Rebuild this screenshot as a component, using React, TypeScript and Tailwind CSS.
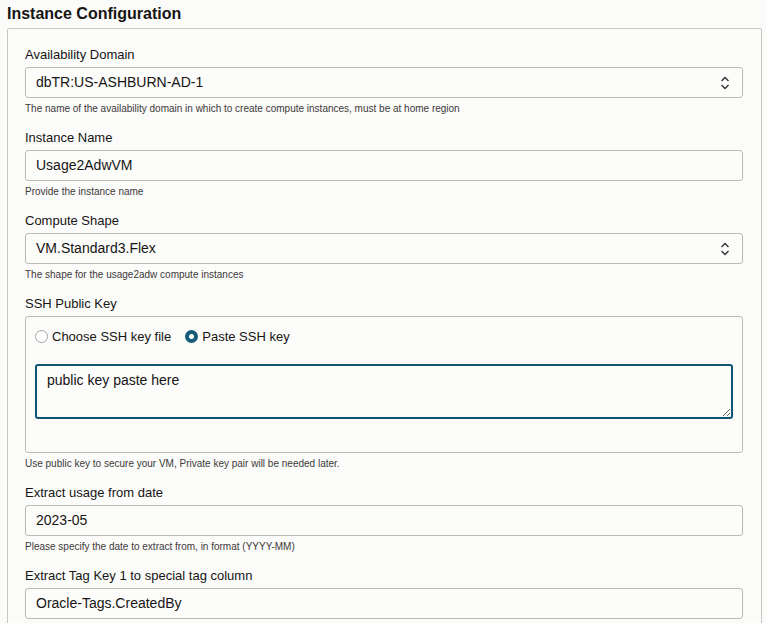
function Chevrons() {
  return (
    <svg width="10" height="14" viewBox="0 0 10 14" className="text-[#333]">
      <path d="M1.5 5 L5 1.5 L8.5 5" fill="none" stroke="currentColor" strokeWidth="1.4" />
      <path d="M1.5 9 L5 12.5 L8.5 9" fill="none" stroke="currentColor" strokeWidth="1.4" />
    </svg>
  );
}

function Field({ label, help, children }: { label: string; help?: string; children: React.ReactNode }) {
  return (
    <div className="flex flex-col">
      <label className="text-[13px] leading-[16px] text-[#161513] mb-[4px]">{label}</label>
      {children}
      {help && <p className="text-[10px] leading-[12px] text-[#3b3a38] mt-[5px]">{help}</p>}
    </div>
  );
}

function TextBox({ value, select }: { value: string; select?: boolean }) {
  return (
    <div className="h-[31px] border border-[#bcbab5] rounded-[3px] bg-[#fcfcfb] flex items-center justify-between pl-[10px] pr-[12px]">
      <span className="text-[14px] text-[#161513]">{value}</span>
      {select && <Chevrons />}
    </div>
  );
}

export default function App() {
  return (
    <div className="w-[766px] h-[623px] overflow-hidden bg-[#fbfbfa] font-['Liberation_Sans',Arial,sans-serif] text-[#161513]">
      <h2 className="text-[16px] leading-[20px] font-bold pl-[7px] pt-[4px] pb-[4px]">Instance Configuration</h2>
      <div className="ml-[7px] mr-[4px] border border-[#c9c7c3] rounded-[2px] pl-[17px] pr-[18px] pt-[18px] pb-[20px] flex flex-col gap-[15px]">
        <Field label="Availability Domain" help="The name of the availability domain in which to create compute instances, must be at home region">
          <TextBox value="dbTR:US-ASHBURN-AD-1" select />
        </Field>
        <Field label="Instance Name" help="Provide the instance name">
          <TextBox value="Usage2AdwVM" />
        </Field>
        <Field label="Compute Shape" help="The shape for the usage2adw compute instances">
          <TextBox value="VM.Standard3.Flex" select />
        </Field>
        <Field label="SSH Public Key" help="Use public key to secure your VM, Private key pair will be needed later.">
          <div className="h-[137px] border border-[#bcbab5] rounded-[3px] pl-[9px] pr-[9px] pt-[10px]">
            <div className="flex items-center gap-[14px] text-[13px]">
              <label className="flex items-center gap-[4px]">
                <span className="w-[13px] h-[13px] rounded-full border border-[#a6a4a0] bg-white" />
                Choose SSH key file
              </label>
              <label className="flex items-center gap-[4px]">
                <span className="w-[13px] h-[13px] rounded-full bg-[#145c7a] flex items-center justify-center">
                  <span className="w-[5px] h-[5px] rounded-full bg-white" />
                </span>
                Paste SSH key
              </label>
            </div>
            <textarea
              readOnly
              defaultValue="public key paste here"
              className="mt-[17px] block w-full h-[55px] border-2 border-[#0f5471] rounded-[3px] bg-[#fcfcfb] px-[10px] py-[5px] text-[14px] leading-[18px] text-[#161513] outline-none resize"
            />
          </div>
        </Field>
        <Field label="Extract usage from date" help="Please specify the date to extract from, in format (YYYY-MM)">
          <TextBox value="2023-05" />
        </Field>
        <Field label="Extract Tag Key 1 to special tag column">
          <TextBox value="Oracle-Tags.CreatedBy" />
        </Field>
      </div>
    </div>
  );
}
